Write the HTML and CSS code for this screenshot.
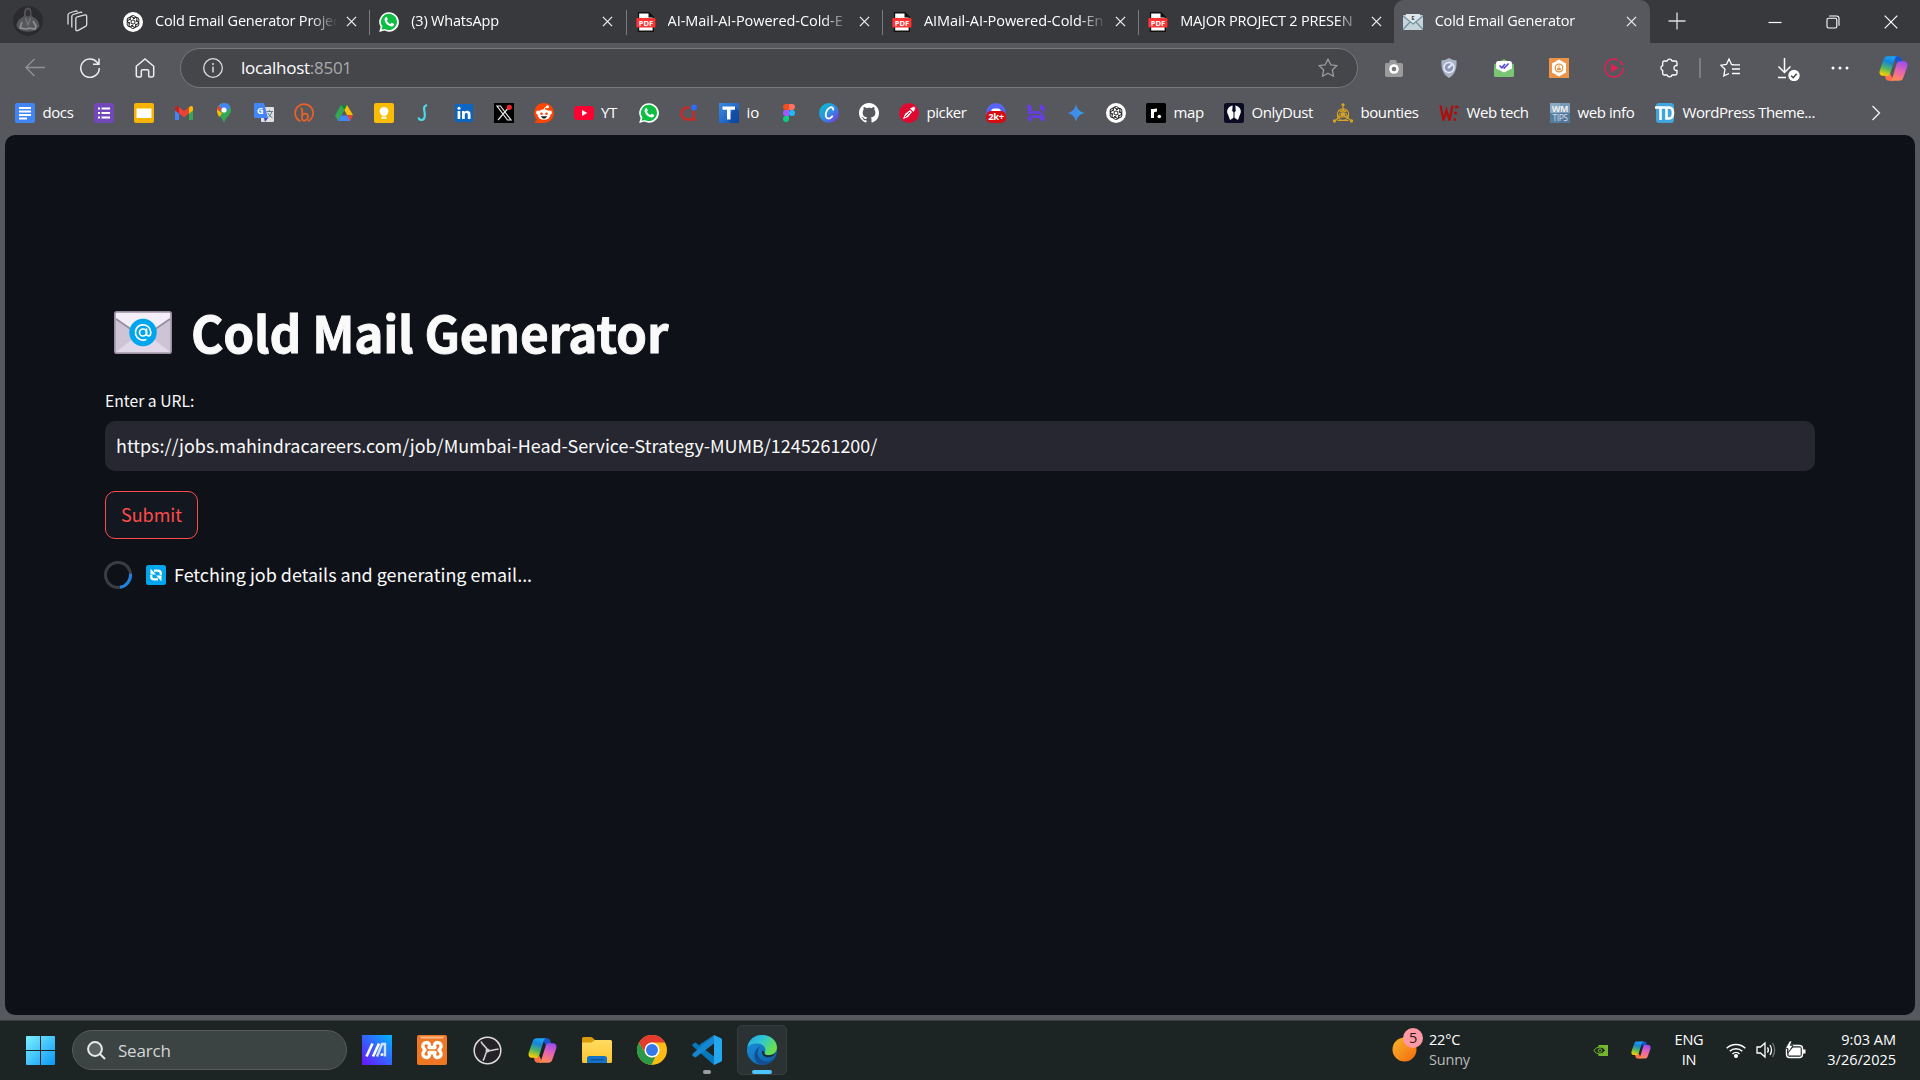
FILE: index.html
```html
<!DOCTYPE html>
<html lang="en">
<head>
<meta charset="utf-8">
<title>Cold Email Generator</title>
<link rel="stylesheet" href="styles.css">
</head>
<body>
<svg class="defs" aria-hidden="true">
  <defs>
    <linearGradient id="cpA" x1="0.6" y1="0" x2="0.3" y2="1"><stop offset="0" stop-color="#18a8f5"/><stop offset=".3" stop-color="#1683d8"/><stop offset=".65" stop-color="#57b75e"/><stop offset="1" stop-color="#ffd000"/></linearGradient>
    <linearGradient id="cpB" x1="0.3" y1="1" x2="0.6" y2="0"><stop offset="0" stop-color="#9a4cf0"/><stop offset=".5" stop-color="#e765b0"/><stop offset="1" stop-color="#ff8a50"/></linearGradient>
    <linearGradient id="win" x1="0" y1="0" x2="1" y2="1"><stop offset="0" stop-color="#7df1ff"/><stop offset="1" stop-color="#0a97f5"/></linearGradient>
    <linearGradient id="ma" x1="0" y1="1" x2="1" y2="0"><stop offset="0" stop-color="#6a12ff"/><stop offset="1" stop-color="#00b4ff"/></linearGradient>
    <linearGradient id="fold" x1="0" y1="0" x2="0" y2="1"><stop offset="0" stop-color="#ffdc62"/><stop offset="1" stop-color="#fcc42c"/></linearGradient>
    <linearGradient id="sun" x1="0" y1="0" x2="1" y2="1"><stop offset="0" stop-color="#f8b52a"/><stop offset="1" stop-color="#f36a10"/></linearGradient>
    <linearGradient id="edgeTop" x1="0" y1="0" x2="1" y2=".5"><stop offset="0" stop-color="#25a5e5"/><stop offset=".5" stop-color="#2fc7d2"/><stop offset="1" stop-color="#6be04c"/></linearGradient>
    <linearGradient id="edgeBody" x1="0" y1="0" x2="1" y2="1"><stop offset="0" stop-color="#1a96e0"/><stop offset="1" stop-color="#0c59a4"/></linearGradient>
    <linearGradient id="canva" x1="0" y1="0" x2="1" y2="1"><stop offset="0" stop-color="#00c4cc"/><stop offset=".5" stop-color="#2f8fe0"/><stop offset="1" stop-color="#7d2ae8"/></linearGradient>
    <linearGradient id="gem" x1="0" y1="0" x2="1" y2="0"><stop offset="0" stop-color="#4a84f5"/><stop offset=".5" stop-color="#3f8ee8"/><stop offset="1" stop-color="#35a6e6"/></linearGradient>
    <linearGradient id="tee" x1="0" y1="0" x2="1" y2="1"><stop offset="0" stop-color="#3b8ae0"/><stop offset="1" stop-color="#0e50b4"/></linearGradient>
  </defs>
  <symbol id="openai" viewBox="0 0 20 20"><circle cx="10" cy="10" r="10" fill="#fff"/><g fill="none" stroke="#222" stroke-width="1"><path id="petal" d="M7.2 8.4V6.2a2.8 2.8 0 0 1 4.7-1.9L13.9 6v4"/><use href="#petal" transform="rotate(60 10 10)"/><use href="#petal" transform="rotate(120 10 10)"/><use href="#petal" transform="rotate(180 10 10)"/><use href="#petal" transform="rotate(240 10 10)"/><use href="#petal" transform="rotate(300 10 10)"/><circle cx="10" cy="10" r="2"/></g></symbol>
  <symbol id="whatsapp" viewBox="0 0 20 20"><path fill="#fff" d="M10 .2a9.8 9.8 0 1 1-4.6 18.4L.2 20l1.4-5A9.8 9.8 0 0 1 10 .2z"/><path fill="#0cbf42" d="M10 1.8a8.1 8.1 0 1 1-4.2 15.1l-3.2.8.8-3.1A8.1 8.1 0 0 1 10 1.8z"/><path fill="#fff" d="M6.8 5.3c.4-.4 1-.3 1.2.2l.7 1.6c.1.3 0 .6-.2.9l-.6.7c.8 1.6 2 2.7 3.600 3.400l.8-1c.2-.3.5-.3.8-.2l1.700.8c.4.2.4.5.3.9-.3 1.400-1.500 2-2.800 1.800C8.600 13.800 6.200 11.200 5.600 8.300c-.2-1.200.4-2.300 1.200-3z"/></symbol>
  <symbol id="pdf" viewBox="0 0 20 20"><path fill="#fff" stroke="#111" stroke-width="1.4" d="M2.500.8h10.500L17.300 5v14.200H2.500z"/><path fill="#111" d="M12.500.5 17.800 5.600h-5.300z"/><rect x=".4" y="6" width="19" height="9.500" rx="1" fill="#f33"/><text x="9.900" y="13.500" class="glyph bold" font-size="7.500" text-anchor="middle" fill="#fff">PDF</text></symbol>
  <symbol id="close" viewBox="0 0 12 12"><path d="M1 1l10 10M11 1L1 11" fill="none" stroke="#eee" stroke-width="1.400"/></symbol>
  <symbol id="copilot" viewBox="0 0 24 24"><path fill="#1a55cf" d="M12 1.800h4q2 0 2.600 2.200l.8 3.200h-5z"/><path fill="#ff7148" d="M12 22.200H8q-2 0-2.600-2.200l-.8-3.200h5z"/><path fill="url(#cpA)" d="M7.200 1.800h8.300c-1.700 0-2.100 1-2.500 2.400l-3.600 11.500c-.5 1.700-1.500 2.300-2.900 2.300H3.600C.9 18 0 16 .6 13.800L3.800 4.500c.7-2 1.700-2.700 3.400-2.700z"/><path fill="url(#cpB)" transform="rotate(180 12 12)" d="M7.200 1.800h8.300c-1.700 0-2.100 1-2.500 2.400l-3.600 11.500c-.5 1.700-1.500 2.300-2.900 2.300H3.600C.9 18 0 16 .6 13.800L3.800 4.500c.7-2 1.700-2.700 3.400-2.700z"/></symbol>
</svg>

<header class="tabstrip">
  <div class="lead">
    <svg class="avatar" viewBox="0 0 30 30"><circle cx="15" cy="15" r="15" fill="#2b2b2e"/><path d="M11 10C10.500 5 12 1.500 15 1.500S19 5 18.500 10l4 2.500c2.500 1.500 3.500 5 4 8l-3 3c-5 3-12 3-17 0l-3-3c0-4 2-7 4-8z" fill="#55575a"/><ellipse cx="15" cy="7" rx="2.400" ry="3.500" fill="#333337"/><path d="M9 16l-2 6 7 1 2-1 6 1 1-3-3-5" fill="none" stroke="#8e9092" stroke-width="1.600"/><path d="M12.500 12l2.500 7 2.500-7" fill="none" stroke="#77797b" stroke-width="1.200"/></svg>
    <svg class="workspaces" viewBox="0 0 22 22" fill="none" stroke="#ddd" stroke-width="1.300"><path d="M9.800 8.500q.2-1.300 1.500-1.600l7.500-2q1.900-.3 1.900 1.500v8q0 1.500-1.200 2l-7.300 4q-2.200 1-2.400-1z"/><path d="M5.800 17.500V6.500q0-1.500 1.500-2l6.700-2.200q1.500-.4 2 .8M2 14.500V5q0-1.500 1.500-2l6-2q1.500-.4 2 .8"/></svg>
  </div>
  <div class="tab"><svg class="ico"><use href="#openai"/></svg><span class="title">Cold Email Generator Projec</span><svg class="x"><use href="#close"/></svg></div>
  <div class="tab"><svg class="ico"><use href="#whatsapp"/></svg><span class="title">(3) WhatsApp</span><svg class="x"><use href="#close"/></svg></div>
  <div class="tab"><svg class="ico"><use href="#pdf"/></svg><span class="title wide">AI-Mail-AI-Powered-Cold-E</span><svg class="x"><use href="#close"/></svg></div>
  <div class="tab"><svg class="ico"><use href="#pdf"/></svg><span class="title wide">AIMail-AI-Powered-Cold-En</span><svg class="x"><use href="#close"/></svg></div>
  <div class="tab last"><svg class="ico"><use href="#pdf"/></svg><span class="title">MAJOR PROJECT 2 PRESEN</span><svg class="x"><use href="#close"/></svg></div>
  <div class="tab active"><svg class="ico" viewBox="0 0 20 20"><rect y="3" width="20" height="15" rx="1" fill="#c5d3da"/><path d="M0 4l10 8 10-8M0 17.500 7 10M20 17.500 13 10" fill="none" stroke="#7391a0" stroke-width="1.200"/><path d="M3 2h14v3l-7 6-7-6z" fill="#dfe7eb"/><text x="10" y="8" class="glyph bold" font-size="6" text-anchor="middle" fill="#3c4f59">E</text></svg><span class="title">Cold Email Generator</span><svg class="x"><use href="#close"/></svg></div>
  <svg class="plus" viewBox="0 0 18 18"><path d="M9 .5v17M.5 9h17" stroke="#ddd" stroke-width="1.300"/></svg>
  <div class="winbtns">
    <svg viewBox="0 0 14 14"><path d="M.5 7.500h13" stroke="#fff" stroke-width="1.200"/></svg>
    <svg viewBox="0 0 14 14" fill="none" stroke="#fff" stroke-width="1.100"><rect x="1" y="3.200" width="9.800" height="9.800" rx="1.500"/><path d="M3.200 1h7.300Q13 1 13 3.500v7.300"/></svg>
    <svg viewBox="0 0 14 14"><path d="M.7.700l12.600 12.600M13.300.700L.700 13.300" stroke="#fff" stroke-width="1.200"/></svg>
  </div>
</header>

<nav class="toolbar">
  <div class="btn"><svg width="20" height="20" viewBox="0 0 20 20" fill="none" stroke="#909196" stroke-width="1.400"><path d="M20 9.500H1M9.500 1 1 9.500 9.500 18"/></svg></div>
  <div class="btn"><svg width="20" height="20" viewBox="0 0 20 20" fill="none" stroke="#eee" stroke-width="1.500"><path d="M19.200 10A9.200 9.200 0 1 1 17 4.200l2 2M19 .5V6.300H13"/></svg></div>
  <div class="btn"><svg width="20" height="20" viewBox="0 0 20 20" fill="none" stroke="#eee" stroke-width="1.500"><path d="M1.300 8.300 10 1l8.700 7.300v9q0 1.700-1.700 1.700h-2.300q-1 0-1-1v-5q0-1.300-1.300-1.300H7.600q-1.300 0-1.300 1.300v5q0 1-1 1H3q-1.700 0-1.700-1.700z"/></svg></div>
  <div class="address">
    <svg width="20" height="20" viewBox="0 0 20 20"><circle cx="10" cy="10" r="9.300" fill="none" stroke="#ddd" stroke-width="1.300"/><path d="M10 8.500v6" stroke="#ddd" stroke-width="1.500"/><circle cx="10" cy="6" r="1" fill="#ddd"/></svg>
    <span class="url">localhost<span class="port">:8501</span></span>
    <svg class="star" width="20" height="20" viewBox="0 0 20 20" fill="none" stroke="#9b9ca0" stroke-width="1.300" stroke-linejoin="round"><path d="M10 1l2.700 5.800 6.300.8-4.700 4.300 1.300 6.400L10 15.200l-5.600 3.100 1.300-6.400L1 7.600l6.300-.8z"/></svg>
  </div>
  <div class="btn ext first"><svg width="20" height="20" viewBox="0 0 20 20"><path fill="#9b9b9b" d="M2 5h3l1-3h6l1 3h4q2 0 2 2v10q0 2-2 2H3q-2 0-2-2V7q0-2 1-2z"/><circle cx="10" cy="11" r="4.800" fill="#fff"/><circle cx="10" cy="11" r="2.300" fill="#777"/></svg></div>
  <div class="btn"><svg width="20" height="20" viewBox="0 0 20 20"><path fill="#a9b4c8" d="M10 0c2.500 1.800 5 2.300 7.500 2.300C18 11 16 16.500 10 20 4 16.500 2 11 2.500 2.300 5 2.300 7.500 1.800 10 0z"/><circle cx="10" cy="9.500" r="5" fill="#8b9ab4" stroke="#eef" stroke-width="1.300"/><path d="M9 10l4-3.500" stroke="#eef" stroke-width="2"/></svg></div>
  <div class="btn"><svg width="20" height="20" viewBox="0 0 20 20"><path fill="#6fbb6b" d="M0 6.500 10 1l10 5.500V17q0 2-2 2H2q-2 0-2-2z"/><path fill="#fff" d="M2 5.500Q2 3 4 3h12q2 0 2 2.500V11l-8 4-8-4z"/><path fill="#7bc674" d="M0 9.500l10 5 10-5V17q0 2-2 2H2q-2 0-2-2z"/><path d="M5.500 7.500l2.300 2.300L11 6M9.500 9.500l.8.500L14.500 5.500" fill="none" stroke="#4c45d8" stroke-width="1.500"/></svg></div>
  <div class="btn"><svg width="20" height="20" viewBox="0 0 20 20"><rect width="20" height="20" fill="#ed9345"/><path fill="#fff" d="M10 1.500 17 5.500v9l-7 4-7-4v-9z"/><circle cx="10" cy="10" r="3.800" fill="none" stroke="#ed9345" stroke-width="1.300"/><path d="M10 7.500v3M8.500 10.500h3v1.200h-3z" stroke="#ed9345" fill="#ed9345"/></svg></div>
  <div class="btn"><svg width="20" height="20" viewBox="0 0 20 20"><circle cx="10" cy="10" r="9.100" fill="none" stroke="#e31f52" stroke-width="1.500" stroke-dasharray="47 2 5 3"/><path fill="#e31f52" d="M7 5.500l7.500 4.500L7 14.500z"/></svg></div>
  <div class="btn"><svg width="20" height="20" viewBox="0 0 20 20" fill="none" stroke="#fff" stroke-width="1.300" stroke-linejoin="round"><path d="M5.500 3h2.700a2.500 2.500 0 0 1 4.800 0h3.200q1.800 0 1.800 1.800V7.500h-1.200a2.600 2.600 0 0 0 0 5H18v2.700q0 1.800-1.800 1.800H13a2.500 2.500 0 0 1-4.800 0H5.500q-1.800 0-1.800-1.800v-2.800a2.500 2.500 0 0 1 0-4.800V4.800Q3.700 3 5.500 3z"/></svg></div>
  <div class="sep"></div>
  <div class="btn"><svg width="20" height="20" viewBox="0 0 20 20" fill="none" stroke="#fff" stroke-width="1.300"><path d="M14 6.800 11.500 6.500 9 1 6.400 6.500.8 7.200l4.200 4.100-1.200 6.500L9 15.500M12 6.800h8M12 11h8M12 15.500h8"/></svg></div>
  <div class="btn"><svg class="dl" width="24" height="24" viewBox="0 0 24 24" fill="none" stroke="#fff" stroke-width="1.500"><path d="M8.500 1v14M2.500 9.500l6 6 6-6M2 20.500h8"/><circle cx="18" cy="18.500" r="5.700" fill="#fff" stroke="none"/><path d="M15.200 18.700l2 2 3.500-4" stroke="#444"/></svg></div>
  <div class="btn"><svg width="18" height="4" viewBox="0 0 18 4" fill="#fff"><circle cx="2" cy="2" r="1.500"/><circle cx="9" cy="2" r="1.500"/><circle cx="16" cy="2" r="1.500"/></svg></div>
  <div class="btn"><svg width="29" height="29"><use href="#copilot"/></svg></div>
</nav>

<nav class="bookmarks">
  <a><svg class="ico" viewBox="0 0 20 20"><rect width="20" height="20" rx="2" fill="#4285f4"/><path d="M4 5h12M4 8.500h12M4 12h12M4 15.500h8" stroke="#fff" stroke-width="1.800"/></svg><span>docs</span></a>
  <a><svg class="ico" viewBox="0 0 20 20"><rect width="20" height="20" rx="2" fill="#7248b9"/><path d="M7.500 5.500H16M7.500 10H16M7.500 14.500H16M4 5.500h2M4 10h2M4 14.500h2" stroke="#fff" stroke-width="2"/></svg></a>
  <a><svg class="ico" viewBox="0 0 20 20"><rect width="20" height="20" rx="2" fill="#f4b400"/><rect x="2.500" y="5.500" width="15" height="9.500" fill="#fff"/></svg></a>
  <a><svg class="ico" viewBox="0 0 20 20"><path fill="#4285f4" d="M1 5l4 3v9H2q-1 0-1-1z"/><path fill="#34a853" d="M19 5l-4 3v9h3q1 0 1-1z"/><path fill="#fbbc04" d="M15 4.300l1.500-1.100Q19 2.200 19 5v2.500l-4 3z"/><path fill="#c5221f" d="M5 4.300 3.500 3.200Q1 2.200 1 5v2.500l4 3z"/><path fill="#ea4335" d="M5 4.300l5 3.800 5-3.800v6.200l-5 3.800-5-3.800z"/></svg></a>
  <a><svg class="ico" viewBox="0 0 20 20"><path fill="#34a853" d="M10 0c4 0 7 3 7 7 0 5-5.500 7-7 13C9 15 3 12 3 7c0-4 3-7 7-7z"/><path fill="#4285f4" d="M8 .4C12 -.8 15 1.200 16.400 4L11 10z"/><path fill="#ea4335" d="M4.600 2.600 8 5.500 5.800 9 3 6.500C3 5 3.600 3.600 4.600 2.600z"/><path fill="#fbbc04" d="M3 6.500 8 10l-2.500 4C3.500 11.500 2.800 9 3 6.500z"/><path fill="#4285f4" d="M4.600 2.600 8 .4 11 3 8 6z"/><circle cx="10" cy="7" r="2.600" fill="#fff"/></svg></a>
  <a><svg class="ico" viewBox="0 0 20 20"><rect x="7" y="4" width="13" height="15" rx="1" fill="#e0e0e0"/><path fill="#4285f4" d="M1 0h9l4 15H1q-1 0-1-1V1q0-1 1-1z"/><path fill="#3949ab" d="M10 15h4l-3 4z"/><text x="6" y="11" class="glyph bold" font-size="9" text-anchor="middle" fill="#fff">G</text><path d="M12.500 8.500h6.500M15.500 7v1.500M18 8.500q-1 4-4 6M14 10q1 3 4.500 5" fill="none" stroke="#607d8b"/></svg></a>
  <a><svg class="ico" viewBox="0 0 20 20" fill="none" stroke="#ee6123" stroke-width="1.700"><path d="M6.500 18.300A9 9 0 1 1 14 18.200"/><path d="M6.500 5.500q2-.5 1.800 2L8 17M8.300 12.500c2-3 6-2 5.700 1.500-.3 4-6 5-6 1.500"/></svg></a>
  <a><svg class="ico" viewBox="0 0 20 20"><path fill="#fbbc04" d="M7.500 2h5.500l6 10h-6z"/><path fill="#34a853" d="M7 2h.8L10.500 7 4 18 1 12.500z"/><path fill="#188038" d="M7 2h6l-2.500 5z"/><path fill="#4285f4" d="M7 12.500h8.500L16.300 18H4z"/><path fill="#ea4335" d="M13 12.300h6L16.300 18z"/></svg></a>
  <a><svg class="ico" viewBox="0 0 20 20"><rect width="20" height="20" rx="2" fill="#fbbc04"/><circle cx="10" cy="8.300" r="4.400" fill="#fff"/><path d="M7.500 10h5v2.500h-5zM7.500 13.800h5v2h-5z" fill="#fff"/></svg></a>
  <a><svg class="ico" viewBox="0 0 20 20"><path d="M13 2c-4 1-3 4-2.300 8 .8 5-1 7-3.500 7-1.700 0-2.500-1-2.500-2.500" fill="none" stroke="#4fd9e8" stroke-width="2.200"/></svg></a>
  <a><svg class="ico" viewBox="0 0 20 20"><rect x="1" y="1" width="18" height="18" rx="1" fill="#0a66c2"/><path fill="#fff" d="M3.600 8h2.700v8H3.600zM8 8h2.500v1.200c1.300-2.200 6-2 6 2V16h-2.700v-4.200c0-2.300-3-2.300-3 0V16H8z"/><circle cx="5" cy="5.300" r="1.500" fill="#fff"/></svg></a>
  <a><svg class="ico" viewBox="0 0 20 20"><rect width="20" height="20" fill="#000"/><path d="M3 3h3.500L17 17h-3.500zM16 3 4 17" fill="none" stroke="#e6e6e6" stroke-width="1.200"/><circle cx="15.300" cy="4.300" r="2.600" fill="#f4212e"/></svg></a>
  <a><svg class="ico" viewBox="0 0 20 20"><path fill="#ff4500" d="M10 0a10 10 0 1 1 0 20H0l3-3A10 10 0 0 1 10 0z"/><circle cx="4" cy="9.500" r="2" fill="#fff"/><circle cx="16" cy="9.500" r="2" fill="#fff"/><circle cx="13.500" cy="3.800" r="1.500" fill="#fff"/><ellipse cx="10" cy="11.500" rx="6.500" ry="5.200" fill="#fff"/><path d="M10 7q0-3 3-3" fill="none" stroke="#fff"/><circle cx="7.500" cy="10.700" r="1.300" fill="#ff4500"/><circle cx="12.500" cy="10.700" r="1.300" fill="#ff4500"/><path d="M6.800 13.300h6.400q-1 2.400-3.200 2.400t-3.200-2.400z" fill="#222"/></svg></a>
  <a class="tight"><svg class="ico" viewBox="0 0 20 20"><rect y="3" width="20" height="14" rx="3.500" fill="#ff0033"/><path fill="#fff" d="M8 7l5.300 3L8 13z"/></svg><span>YT</span></a>
  <a><svg class="ico"><use href="#whatsapp"/></svg></a>
  <a><svg class="ico" viewBox="0 0 20 20"><path d="M11 4.500H8.500a5.500 5.500 0 0 0 0 12H17M14.500 8v8" fill="none" stroke="#c42b2b" stroke-width="2.700"/><circle cx="15" cy="4.300" r="2.900" fill="#2f6bff"/></svg></a>
  <a class="spread"><svg class="ico" viewBox="0 0 20 20"><rect width="20" height="20" fill="url(#tee)"/><path fill="#0b3f92" opacity=".6" d="M16 4l4 4v12h-8l-4-4z"/><path fill="#fff" d="M3.500 3.500h12.500v3.300h-4.500v9.700H8V6.800H3.500z"/></svg><span>io</span></a>
  <a><svg class="ico" viewBox="0 0 20 20"><path fill="#f24e1e" d="M10 1H7a3 3 0 0 0 0 6h3z"/><path fill="#ff7262" d="M10 1h3a3 3 0 0 1 0 6h-3z"/><path fill="#a259ff" d="M10 7H7a3 3 0 0 0 0 6h3z"/><circle cx="13" cy="10" r="3" fill="#1abcfe"/><path fill="#0acf83" d="M10 13H7a3 3 0 1 0 3 3z"/></svg></a>
  <a><svg class="ico" viewBox="0 0 20 20"><circle cx="10" cy="10" r="10" fill="url(#canva)"/><path d="M14 7.500c1-2.300-1-4-3.500-2.800C7 6.500 5.500 13 8 15c2 1.300 4.500 0 5.700-2.300" fill="none" stroke="#fff" stroke-width="1.800"/></svg></a>
  <a><svg class="ico" viewBox="0 0 16 16"><path fill="#fff" d="M8 0C3.580 0 0 3.580 0 8c0 3.540 2.290 6.530 5.470 7.590.4.070.55-.17.55-.38 0-.19-.01-.82-.01-1.490-2.010.37-2.530-.49-2.690-.94-.09-.23-.48-.94-.82-1.130-.28-.15-.68-.52-.01-.53.63-.01 1.080.58 1.230.82.72 1.210 1.870.87 2.330.66.07-.52.28-.87.51-1.070-1.780-.2-3.640-.89-3.640-3.950 0-.87.31-1.590.82-2.150-.08-.2-.36-1.020.08-2.120 0 0 .67-.21 2.200.82.64-.18 1.320-.27 2-.27s1.360.09 2 .27c1.530-1.040 2.200-.82 2.200-.82.44 1.100.16 1.920.08 2.120.51.56.82 1.270.82 2.150 0 3.070-1.870 3.750-3.650 3.950.29.25.54.73.54 1.480 0 1.070-.01 1.930-.01 2.200 0 .21.15.46.55.38A8.010 8.010 0 0 0 16 8c0-4.420-3.580-8-8-8z"/></svg></a>
  <a><svg class="ico" viewBox="0 0 20 20"><circle cx="10" cy="10" r="10" fill="#e0092f"/><path fill="#fff" d="M4 16l2-5 5-4 2 2-4 5z"/><path fill="#fff" d="M11 5.500l4-2 1.500 1.500-2 4z"/><path d="M6 14l5-5" stroke="#e0092f"/></svg><span>picker</span></a>
  <a><svg class="ico" viewBox="0 0 20 20"><circle cx="10" cy="10" r="10" fill="#5865f2"/><path fill="#fff" d="M5 8q1-3 3-2.500h4Q14 5 15 8z"/><rect y="8" width="20" height="12" rx="5" fill="#d90b12"/><text x="10" y="17.300" class="glyph bold" font-size="9.500" text-anchor="middle" fill="#fff">2k+</text></svg></a>
  <a><svg class="ico" viewBox="0 0 20 20"><path fill="#673de6" d="M1.500 1 6 3.500V8H1.500zM6.500 8H13l5 2.800H1.500L1.500 9zM14 1l4.500 2.500V9L14 6.500zM1.500 12.200h12L18.500 15v4L14 16.500V15H6.500zM1.500 13 6 15.500V19l-4.500-2.500zM14 11.800h4.500V19L14 16.500z"/></svg></a>
  <a><svg class="ico" viewBox="0 0 20 20"><path fill="url(#gem)" d="M10 1.500Q11.500 8.500 18.500 10 11.500 11.500 10 18.500 8.500 11.500 1.500 10 8.500 8.500 10 1.500z"/></svg></a>
  <a><svg class="ico"><use href="#openai"/></svg></a>
  <a><svg class="ico" viewBox="0 0 20 20"><rect width="20" height="20" rx="1.500" fill="#000"/><path d="M6.500 15V6M6.500 10q0-3 4.500-3" fill="none" stroke="#fff" stroke-width="3"/><circle cx="13.300" cy="13.500" r="1.800" fill="#fff"/></svg><span>map</span></a>
  <a><svg class="ico" viewBox="0 0 20 20"><rect width="20" height="20" rx="2.500" fill="#0a0a22"/><path fill="#fff" d="M8.700 2.500C4 3 1.800 8 4 11.500L6 17l4-2.500V9.500L8.200 8zM11.300 2.500C16 3 18.200 8 16 11.500L14 17l-4-2.500V9.500L11.800 8z"/><path d="M10 6v9" stroke="#0a0a22"/></svg><span>OnlyDust</span></a>
  <a><svg class="ico" viewBox="0 0 20 20" fill="none" stroke="#d9a520" stroke-width="1.100"><circle cx="10" cy="11.500" r="5.700"/><path d="M10 2v9.500L1.500 18M10 11.500l8.500 6.500M4.500 17.500h11M6.500 7l3.500 4.500L13.500 7M5 14l5-8 5 8z"/><g fill="#d9a520"><circle cx="10" cy="1.800" r="1.100"/><circle cx="1.500" cy="18" r="1.100"/><circle cx="18.500" cy="18" r="1.100"/><circle cx="10" cy="11.500" r="1.500"/></g></svg><span>bounties</span></a>
  <a><svg class="ico" viewBox="0 0 20 20"><path d="M1.500 2.500 4.500 17.500 7.500 7l3 10.500 3-15" fill="none" stroke="#b00d0d" stroke-width="2.200"/><path d="M16 4h3.500M15 10h3M14.500 16.500h2.500" stroke="#b00d0d" stroke-width="2.500"/></svg><span>Web tech</span></a>
  <a><svg class="ico" viewBox="0 0 20 20"><rect width="20" height="10" fill="#88aac5"/><rect y="10" width="20" height="10" fill="#547f9f"/><rect x="10" width="10" height="20" fill="#406d90" opacity=".25"/><text x="10" y="9" class="glyph bold" font-size="9" text-anchor="middle" fill="#eee">WM</text><text x="10" y="18.300" class="glyph" font-size="8.500" text-anchor="middle" fill="#dde">TIPS</text></svg><span>web info</span></a>
  <a><svg class="ico" viewBox="0 0 20 20"><rect x="1" width="18" height="20" rx="3" fill="#41a5dc"/><path d="M0 4.500h11M5.500 4.500V17M11.500 4.500V15.500h2.500q4 0 4-5.500t-4-5.500z" fill="none" stroke="#fff" stroke-width="2.600"/></svg><span>WordPress Theme...</span></a>
  <a class="more"><svg width="10" height="16" viewBox="0 0 10 16"><path d="M1.500 1l7 7-7 7" fill="none" stroke="#eee" stroke-width="1.400"/></svg></a>
</nav>

<main class="page">
  <h1><svg class="envelope" viewBox="0 0 58 43"><rect x=".8" y=".8" width="56.400" height="41.400" rx="2" fill="#cdc4d6" stroke="#998da2" stroke-width="1.600"/><path fill="#e1d8e9" d="M2 41 25 23h8l23 18z"/><path fill="#f3eef8" d="M2 2h54v5L33 23q-4 2.500-8 0L2 7z"/><path d="M2 8l22 15M56 8 34 23" stroke="#998da2" stroke-width="1.700"/><circle cx="29" cy="21.500" r="13.700" fill="#00a6ed"/><circle cx="29" cy="21.500" r="3.500" fill="none" stroke="#fff" stroke-width="1.700"/><path d="M32.500 17.500v5.500q.3 2 2 2 2.300 0 2.300-4a7.700 7.700 0 1 0-4.500 7.500" fill="none" stroke="#fff" stroke-width="1.700"/></svg><span>Cold Mail Generator</span></h1>
  <label class="field-label">Enter a URL:</label>
  <div class="field">https://jobs.mahindracareers.com/job/Mumbai-Head-Service-Strategy-MUMB/1245261200/</div>
  <button class="submit">Submit</button>
  <div class="status">
    <svg class="spinner" viewBox="0 0 28 28" fill="none" stroke-width="3"><circle cx="14" cy="14" r="12.500" stroke="#3b3d43"/><path d="M26.500 12.700A12.500 12.500 0 0 1 16 26.300" stroke="#1c83e1"/></svg>
    <svg class="refresh" viewBox="0 0 20 20"><rect width="20" height="20" rx="2.500" fill="#00a6ed"/><path d="M14.800 10V8.500q0-2.800-2.800-2.800H8M5.200 10v1.500q0 2.800 2.800 2.800h4" fill="none" stroke="#fff" stroke-width="2.200"/><path fill="#fff" d="M4.500 3.500V9.500H10zM15.500 16.500v-6H10z"/></svg>
    <span>Fetching job details and generating email...</span>
  </div>
</main>

<footer class="taskbar">
  <svg class="start" viewBox="0 0 29 29" fill="url(#win)"><path d="M1 0h13v14H0V1q0-1 1-1zM15 0h13q1 0 1 1v13H15zM0 15h14v14H1q-1 0-1-1zM15 15h14v13q0 1-1 1H15z"/></svg>
  <div class="search"><svg width="19" height="19" viewBox="0 0 19 19" fill="none" stroke="#e8eaea" stroke-width="2"><circle cx="8" cy="8" r="6.900" fill="#5a6263"/><path d="M13 13l5 5"/></svg><span>Search</span></div>
  <div class="apps">
    <div class="app"><svg width="30" height="30" viewBox="0 0 30 30"><rect width="30" height="30" fill="url(#ma)"/><path d="M4.500 21.500 10.500 8.500M11 21.500 17 8.500" stroke="#fff" stroke-width="2.600"/><path d="M15 21.500 20 9h3v12.500" fill="none" stroke="#cfe2ff" stroke-width="2.400"/><circle cx="20" cy="19.500" r="1.500" fill="#fff"/></svg></div>
    <div class="app"><svg width="30" height="30" viewBox="0 0 30 30"><rect width="30" height="30" rx="2" fill="#ef7622"/><path d="M3 1.500h24l-1 2H4z" fill="#f8b98b"/><path d="M12 12.500C13.500 9.500 11.500 7.200 9.300 7.500 6 7.800 5 11 6.700 13.300L8 15l-1.300 1.700C5 19 6 22.200 9.300 22.500c2.200.3 4.200-2 2.700-5h6c-1.500 3 .5 5.300 2.700 5 3.300-.3 4.300-3.500 2.600-5.800L22 15l1.300-1.700c1.700-2.300.7-5.500-2.600-5.800-2.200-.3-4.200 2-2.700 5z" fill="none" stroke="#fff" stroke-width="3.400" stroke-linejoin="round"/></svg></div>
    <div class="app"><svg width="29" height="29" viewBox="0 0 29 29"><circle cx="14.500" cy="14.500" r="13.300" fill="#242226" stroke="#ddd" stroke-width="1.500"/><g fill="none" stroke="#cfcfd1" stroke-width="1.600"><path id="obsarm" d="M14.500 14.500C13 10 9.500 9.500 8 5.500"/><use href="#obsarm" transform="rotate(120 14.500 14.500)"/><use href="#obsarm" transform="rotate(240 14.500 14.500)"/></g><circle cx="14.500" cy="14.500" r="2" fill="#cfcfd1"/></svg></div>
    <div class="app"><svg width="29" height="29"><use href="#copilot"/></svg></div>
    <div class="app"><svg width="30" height="30" viewBox="0 0 30 30"><path fill="#d99b07" d="M0 3.500Q0 2 1.500 2h7.300q1 0 1.800.8L13 5h16v8H0z"/><path fill="url(#fold)" d="M0 7.500h9.500L13 5h15.500Q30 5 30 6.500V26.500q0 1.500-1.500 1.500h-27Q0 28 0 26.500z"/><path fill="#1272c8" d="M5 28v-4.500Q5 21 7.500 21h15q2.500 0 2.500 2.500V28z"/><path d="M9 24.700h12.500" stroke="#0b4a8e" stroke-width="1.200"/></svg></div>
    <div class="app"><svg width="30" height="30" viewBox="0 0 30 30"><circle cx="15" cy="15" r="15" fill="#fbbc16"/><path fill="#e33b2e" d="M2 7.500A15 15 0 0 1 28 7.500H15L8.500 18.700z"/><path fill="#2a9948" d="M2 7.500 8.500 18.700Q11 22.500 15 22.500L19 20l-4.500 10A15 15 0 0 1 2 7.500z"/><circle cx="15" cy="15" r="7.500" fill="#fff"/><circle cx="15" cy="15" r="6" fill="#3578ea"/></svg></div>
    <div class="app running"><svg width="30" height="30" viewBox="0 0 30 30"><path fill="#0878bd" d="M22 0 9.500 12 3.500 7.500.5 9v2l21.500 19V21.500L7 10z"/><path fill="#1487d0" d="M22 0v8.500L3.500 22.500.5 21v-2z"/><path fill="#25a7f0" d="M22 0l7 3.200q1 .5 1 1.800v20q0 1.300-1 1.800L22 30z"/></svg></div>
    <div class="app current"><svg width="30" height="30" viewBox="0 0 30 30"><circle cx="15" cy="15" r="15" fill="url(#edgeBody)"/><path fill="#124f92" d="M14 11c-6 4-4 16 7 15.500q4-.3 6.500-3.500C24 29 18 31 13 29.500 5 26 6 14 14 11z"/><path fill="url(#edgeTop)" d="M.3 12C2 4 8 0 15 0c9 0 15 6 15 12.500 0 5-4 7.500-8 7.500-3 0-5-1-4.500-2.200C20 14 17 9 11 8.500 6 8.300 2 10 .3 12z"/><path fill="#1f2b2e" d="M17.600 17.600c-.8 1.500 1 2.700 3.500 2.700q5 .2 8-3.200-2 5-7.500 5.200c-5 .2-7.500-3.500-6.300-7z"/></svg></div>
  </div>
  <div class="weather"><svg class="sunicon" width="38" height="38" viewBox="0 0 38 38"><circle cx="12.500" cy="22.500" r="12" fill="url(#sun)"/><circle cx="21" cy="11" r="10" fill="#ff99a4"/><text x="21" y="16.200" class="glyph" font-size="14.500" text-anchor="middle" fill="#1a1a1a">5</text></svg><div class="wtext"><span>22°C</span><span class="dim">Sunny</span></div></div>
  <div class="tray">
    <svg class="nvidia" viewBox="0 0 15 11"><path fill="#74b62c" d="M5.500 0H15v11H5.500z"/><path d="M.7 5.500Q3 2 7 2t5.500 3.500Q10 9 7 9 3 9 .7 5.500z" fill="#222b20" stroke="#74b62c"/><circle cx="7" cy="5.500" r="1.700" fill="none" stroke="#74b62c"/></svg>
    <svg class="cp" width="20" height="20"><use href="#copilot"/></svg>
    <div class="lang"><span>ENG</span><span>IN</span></div>
    <svg class="wifi" viewBox="0 0 20 16" fill="none" stroke="#fff" stroke-width="1.500"><path d="M.7 6.300a13 13 0 0 1 18.600 0M3.700 9.200a9 9 0 0 1 12.600 0M6.500 12a5 5 0 0 1 7 0"/><circle cx="10" cy="14" r="1.300" fill="#fff"/></svg>
    <svg class="vol" viewBox="0 0 20 18" fill="none" stroke="#fff" stroke-width="1.300"><path d="M1 6h3.500L9 2v14l-4.500-4H1z"/><path d="M11.500 6.300q1.700 2.700 0 5.400M14 4q3 5 0 10"/><path d="M16.500 2q4.300 7 0 14" stroke="#707575"/></svg>
    <svg class="bat" viewBox="0 0 21 18"><rect x="1.500" y="4.500" width="16" height="12" rx="3" fill="none" stroke="#fff" stroke-width="1.400"/><path fill="#fff" d="M8 6.500h7.700v8H3.500v-3z"/><path d="M18 8.500h2.500v4H18z" fill="#fff"/><path fill="#fff" stroke="#1d2424" stroke-width=".8" d="M4.500 0 .5 7.500H3V12l5-7.500H5.200L7 0z"/></svg>
    <div class="clock"><span>9:03 AM</span><span>3/26/2025</span></div>
  </div>
</footer>
</body>
</html>
```

FILE: styles.css
```css
* { box-sizing: border-box; }
html, body { margin: 0; height: 100%; }
body {
  width: 1920px;
  height: 1080px;
  display: flex;
  flex-direction: column;
  overflow: hidden;
  background: #57585d;
  color: #fff;
  font-family: "Open Sans", "Noto Sans", sans-serif;
  font-size: 15px;
}
svg { display: block; flex: none; }
.defs { position: absolute; width: 0; height: 0; }
.glyph { font-family: "Open Sans", sans-serif; }
.bold { font-weight: 700; }
.ico { width: 20px; height: 20px; }

.tabstrip { display: flex; align-items: center; height: 43px; flex: none; background: #38393d; }
.lead { width: 114px; display: flex; align-items: center; padding: 0 0 2px 13px; gap: 23px; }
.avatar { width: 30px; height: 30px; }
.workspaces { width: 22px; height: 22px; }
.tab {
  width: 256.3px;
  height: 43px;
  display: flex;
  align-items: center;
  padding-left: 9px;
  flex: none;
  background: linear-gradient(#7b7c80, #7b7c80) right 10px / 1px 25px no-repeat;
}
.tab.last { width: 254.5px; background: none; }
.title {
  width: 181px;
  margin-left: 12px;
  padding-bottom: 2px;
  white-space: nowrap;
  overflow: hidden;
  font-size: 14.5px;
  letter-spacing: -0.2px;
  line-height: 24px;
  -webkit-mask-image: linear-gradient(90deg, #000 155px, transparent 183px);
  mask-image: linear-gradient(90deg, #000 155px, transparent 183px);
}
.title.wide { letter-spacing: -0.05px; }
.x { width: 11px; height: 11px; margin-left: 10px; }
.tab.active { width: 256px; background: #57585d; border-radius: 10px 10px 0 0; }
.plus { width: 18px; height: 18px; margin: 0 0 2px 18px; }
.winbtns { margin-left: auto; display: flex; gap: 44px; padding-right: 22px; }
.winbtns svg { width: 14px; height: 14px; }

.toolbar { display: flex; align-items: center; height: 50px; flex: none; padding-left: 7.5px; }
.btn { width: 55px; flex: none; display: grid; place-items: center; }
.btn:last-child { width: 53px; }
.dl { margin-left: 6px; margin-top: 2px; }
.ext.first { margin-left: 8.5px; }
.sep { width: 2px; height: 20px; background: #7d7e82; margin: 0 1px 0 3px; flex: none; }
.address {
  flex: 1;
  height: 40px;
  margin-left: 7.5px;
  display: flex;
  align-items: center;
  padding: 0 19px 0 22px;
  background: #45464a;
  border: 1px solid #77787c;
  border-radius: 20px;
}
.url { margin-left: 18px; padding-bottom: 1px; font-size: 17px; letter-spacing: -0.27px; line-height: 24px; }
.port { color: #a9aaac; }
.star { margin-left: auto; }

.bookmarks {
  display: grid;
  grid-template-columns: 79px repeat(12, 40px) 65px 40px 40px 60px 40px 40px 40px 87px repeat(4, 40px) 78px 109px 106px 111px 105px 1fr 49px;
  align-items: center;
  height: 40px;
  flex: none;
  padding-left: 15px;
}
.bookmarks a { display: flex; align-items: center; gap: 7.5px; white-space: nowrap; font-size: 15px; letter-spacing: -0.42px; line-height: 20px; }
.bookmarks span { padding-bottom: 2px; }
.bookmarks a.tight { gap: 7px; }
.bookmarks a.spread { letter-spacing: 0; }

.page {
  flex: 1;
  margin: 2px 5px 5px;
  padding: 167px 100px 0;
  background: #0e1117;
  border-radius: 10px;
  font-family: "Noto Sans CJK SC", sans-serif;
  color: #fafafa;
  display: flex;
  flex-direction: column;
  align-items: flex-start;
}
h1 { margin: 0; height: 60px; display: flex; align-items: center; padding-left: 9px; font-size: 49.5px; font-weight: 700; line-height: 60px; gap: 19px; white-space: nowrap; letter-spacing: -0.2px; -webkit-text-stroke: 0.9px #fafafa; }
h1 span { padding-bottom: 1px; }
.envelope { width: 58px; height: 43px; }
.field-label { margin-top: 28px; height: 22px; font-size: 15.7px; line-height: 22px; }
.field { margin-top: 9px; width: 100%; height: 50px; padding: 0 11px; background: #262730; border-radius: 10px; font-size: 17.93px; line-height: 48px; }
.submit { margin-top: 20px; width: 93px; height: 48px; padding: 0 0 2px; background: #131720; color: #ff4b4b; border: 1px solid #ff4b4b; border-radius: 10px; font: 18px "Noto Sans CJK SC", sans-serif; }
.status { margin-top: 22px; height: 28px; display: flex; align-items: center; font-size: 17.95px; line-height: 26px; }
.status span { padding-bottom: 2px; }
.spinner { width: 28px; height: 28px; margin-left: -1px; }
.refresh { width: 20px; height: 20px; margin: 0 8px 0 14px; }

.taskbar { height: 60px; flex: none; display: flex; align-items: center; background: #1d2424; border-top: 1px solid #3b4040; padding: 0 24px 1px 26px; }
.start { width: 29px; height: 29px; }
.search { width: 275px; height: 40px; margin-left: 17px; padding-left: 14px; display: flex; align-items: center; gap: 12px; background: #3c4343; border: 1px solid #555b5c; border-radius: 20px; font-size: 17px; color: #d4d6d6; letter-spacing: -0.2px; }
.apps { display: flex; gap: 5px; margin-left: 5px; }
.app { position: relative; width: 50px; height: 50px; border-radius: 5px; display: grid; place-items: center; }
.running::after, .current::after { content: ""; position: absolute; bottom: 1px; left: 21px; width: 8px; height: 4px; border-radius: 2px; background: #9b9fa0; }
.current { background: #2b3233; border: 1px solid #363d3e; }
.current::after { left: 14px; bottom: 0; width: 20px; background: #4cc2ff; }
.weather { display: flex; align-items: center; margin-left: 605px; font-size: 14.5px; letter-spacing: -0.2px; }
.sunicon { margin: -8px -1px 0 0; }
.wtext, .lang, .clock { display: flex; flex-direction: column; line-height: 20px; }
.dim { color: #b9bcbc; }
.tray { margin-left: auto; display: flex; align-items: center; font-size: 14.5px; letter-spacing: -0.2px; }
.nvidia { width: 15px; height: 11px; }
.cp { margin-left: 23px; }
.lang { width: 40px; margin-left: 18px; text-align: center; }
.wifi { width: 20px; height: 16px; margin-left: 17px; }
.vol { width: 20px; height: 18px; margin-left: 10px; }
.bat { width: 21px; height: 18px; margin-left: 9px; }
.clock { width: 90px; text-align: right; letter-spacing: 0; }
```
